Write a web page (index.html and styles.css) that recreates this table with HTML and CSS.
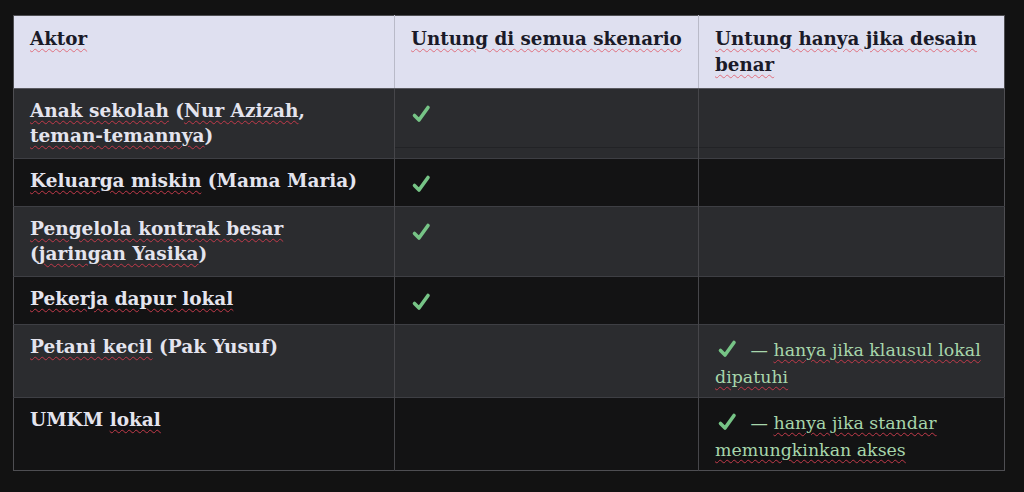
FILE: index.html
```html
<!DOCTYPE html>
<html lang="id">
<head>
<meta charset="utf-8">
<link rel="stylesheet" href="styles.css">
</head>
<body>
<table class="grid">
  <colgroup><col class="c1"><col class="c2"><col class="c3"></colgroup>
  <thead>
    <tr>
      <th><span class="sp">Aktor</span></th>
      <th><span class="sp nw">Untung di semua skenario</span></th>
      <th><span class="sp">Untung hanya jika desain benar</span></th>
    </tr>
  </thead>
  <tbody>
    <tr class="odd first">
      <td class="actor"><span class="sp">Anak sekolah</span> (<span class="sp">Nur Azizah</span>, <span class="sp nw">teman-temannya</span>)</td>
      <td class="mark"><svg class="chk" viewBox="0 0 20 20"><path d="M3.5 11.5 L8 16 L17 3.5"/></svg></td>
      <td></td>
    </tr>
    <tr class="even">
      <td class="actor"><span class="sp">Keluarga miskin</span> (Mama Maria)</td>
      <td class="mark"><svg class="chk" viewBox="0 0 20 20"><path d="M3.5 11.5 L8 16 L17 3.5"/></svg></td>
      <td></td>
    </tr>
    <tr class="odd">
      <td class="actor"><span class="sp">Pengelola kontrak besar</span> <span class="nw">(<span class="sp">jaringan Yasika</span>)</span></td>
      <td class="mark"><svg class="chk" viewBox="0 0 20 20"><path d="M3.5 11.5 L8 16 L17 3.5"/></svg></td>
      <td></td>
    </tr>
    <tr class="even">
      <td class="actor"><span class="sp">Pekerja dapur lokal</span></td>
      <td class="mark"><svg class="chk" viewBox="0 0 20 20"><path d="M3.5 11.5 L8 16 L17 3.5"/></svg></td>
      <td></td>
    </tr>
    <tr class="odd">
      <td class="actor"><span class="sp">Petani kecil</span> (Pak Yusuf)</td>
      <td></td>
      <td class="note"><svg class="chk inl" viewBox="0 0 20 20"><path d="M3.5 11.5 L8 16 L17 3.5"/></svg> — <span class="sp">hanya jika klausul lokal dipatuhi</span></td>
    </tr>
    <tr class="even">
      <td class="actor">UMKM <span class="sp">lokal</span></td>
      <td></td>
      <td class="note"><svg class="chk inl" viewBox="0 0 20 20"><path d="M3.5 11.5 L8 16 L17 3.5"/></svg> — <span class="sp">hanya jika standar memungkinkan akses</span></td>
    </tr>
  </tbody>
</table>
</body>
</html>
```

FILE: styles.css
```css
html, body {
  margin: 0;
  padding: 0;
  background: #121212;
}
body {
  padding: 15px 0 0 13px;
  font-family: "DejaVu Serif", "Liberation Serif", serif;
  font-size: 18.5px;
  line-height: 25px;
}
.grid {
  border-collapse: collapse;
  table-layout: fixed;
  width: 991px;
  border: 1px solid #4e4e52;
}
.c1 { width: 381px; }
.c2 { width: 304px; }
.c3 { width: 306px; }
.grid th {
  background: #dfe0f0;
  color: #1a1a28;
  font-weight: bold;
  font-size: 18.3px;
  text-align: left;
  vertical-align: top;
  line-height: 26px;
  padding: 10px 8px 10px 16px;
  border-left: 1px solid #b9bac8;
  border-bottom: 1px solid #5a5a60;
}
.grid th:first-child { border-left: none; }
.grid td {
  color: #e4e4ee;
  vertical-align: top;
  padding: 9px 16px 10px 16px;
  border-left: 1px solid #46464a;
  border-top: 1px solid #3e3f44;
}
.grid td:first-child { border-left: none; }
.actor { font-weight: bold; }
.nw { white-space: nowrap; }
.odd td { background: #2b2c2f; }
.even td { background: #131314; }
.first td:not(:first-child) {
  box-shadow: inset 0 -10px 0 #2b2c2f, inset 0 -11px 0 #222326;
}
.chk {
  width: 20px;
  height: 20px;
  display: block;
  fill: none;
  stroke: #76c486;
  stroke-width: 3.6;
  stroke-linecap: round;
  stroke-linejoin: round;
}
.mark .chk {
  margin: 6px 0 2px 0;
}
.chk.inl {
  display: inline-block;
  vertical-align: -3px;
  margin: 0 8px 0 2px;
}
.grid td.note {
  color: #a7d6ab;
  font-weight: normal;
  font-size: 17.4px;
  line-height: 27px;
  padding-top: 12px;
  padding-bottom: 6px;
}
.sp {
  text-decoration: underline wavy #c23a4a;
  text-decoration-thickness: 1px;
  text-underline-offset: 3px;
}
th .sp { text-decoration-color: #e0707e; }
```
